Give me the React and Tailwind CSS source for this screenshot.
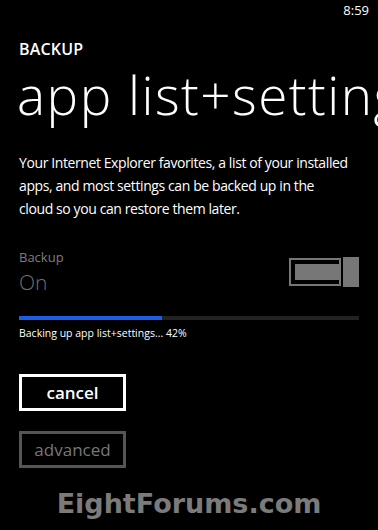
import React from "react";

export default function App() {
  const progress = 42;

  return (
    <div
      className="w-[378px] h-[530px] overflow-hidden bg-black text-white relative"
      style={{ fontFamily: "'Open Sans', 'Noto Sans', sans-serif" }}
    >
      {/* Status bar */}
      <div className="flex justify-end pr-[9px] pt-[2px] h-[22px]">
        <span className="text-[13px] leading-[16px] text-white">8:59</span>
      </div>

      {/* Header */}
      <div className="pl-[19px] mt-[17px]">
        <div className="text-[16px] leading-[20px] font-semibold tracking-[0.2px]">BACKUP</div>
        <div className="text-[53px] leading-[52px] font-light whitespace-nowrap tracking-[1.5px] -ml-[2px] mt-[10px]">
          app list+settings
        </div>
      </div>

      {/* Description */}
      <p className="pl-[19px] w-[350px] mt-[30px] text-[14px] leading-[23px] tracking-[-0.4px] text-white">
        Your Internet Explorer favorites, a list of your installed apps, and most settings can be
        backed up in the cloud so you can restore them later.
      </p>

      {/* Toggle row */}
      <div className="flex justify-between items-start pl-[19px] pr-[19px] mt-[29px]">
        <div>
          <div className="text-[13px] leading-[16px] text-[#7d7d7d]">Backup</div>
          <div className="text-[21px] leading-[26px] font-light text-[#6f6f6f] mt-[4px]">On</div>
        </div>
        <div className="flex items-center mt-[8px]">
          <div className="w-[52px] h-[28px] border-[2px] border-[#777] p-[4px] pr-0 flex">
            <div className="flex-1 bg-[#777]" />
          </div>
          <div className="w-[16px] h-[30px] bg-[#777] ml-[2px]" />
        </div>
      </div>

      {/* Progress */}
      <div className="pl-[19px] pr-[19px] mt-[21px]">
        <div className="h-[4px] bg-[#222] w-full">
          <div className="h-full bg-[#1a5ee8]" style={{ width: `${progress}%` }} />
        </div>
        <div className="text-[10.5px] leading-[14px] mt-[6px] text-white">
          Backing up app list+settings... {progress}%
        </div>
      </div>

      {/* Buttons */}
      <div className="pl-[19px] mt-[34px] flex flex-col gap-[20px]">
        <button className="w-[107px] h-[37px] border-[3px] border-white text-[17px] font-semibold text-white leading-none">
          cancel
        </button>
        <button className="w-[107px] h-[37px] border-[3px] border-[#555] text-[17px] text-[#777] leading-none">
          advanced
        </button>
      </div>

      {/* Watermark */}
      <div
        className="absolute left-0 right-0 top-[484px] text-center text-[27px] font-bold text-[#7b7b7b]"
        style={{ fontFamily: "'DejaVu Sans', Verdana, sans-serif" }}
      >
        EightForums.com
      </div>
    </div>
  );
}
